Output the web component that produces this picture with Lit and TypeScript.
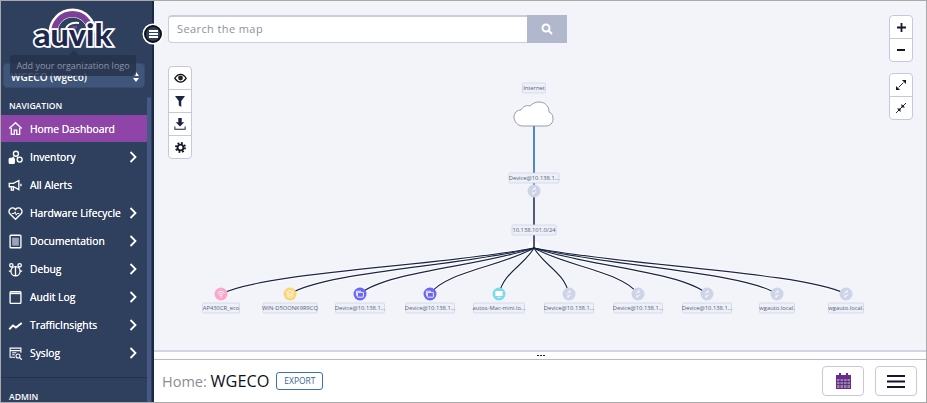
import { LitElement, html, svg, css } from 'lit';
import { customElement } from 'lit/decorators.js';

const HUB_X = 534;
const HUB_Y = 248;
const NODE_Y = 294;

const wifi = svg`<g fill="none" stroke="#fff" stroke-width="0.9"><path d="M-3.4 -1a5 5 0 0 1 6.8 0"/><path d="M-2.2 0.5a3.2 3.2 0 0 1 4.4 0"/><path d="M-1 1.9a1.5 1.5 0 0 1 2 0"/></g><circle cy="3" r="0.6" fill="#fff"/>`;
const layers = svg`<g fill="none" stroke="#fff" stroke-width="0.8"><path d="M0 -3.6 3.4 -1.8 0 0 -3.4 -1.8Z"/><path d="M-3.4 0 0 1.8 3.4 0"/><path d="M-3.4 1.8 0 3.6 3.4 1.8"/></g>`;
const windows = svg`<g fill="none" stroke="#fff" stroke-width="0.9"><rect x="-2.6" y="-1.6" width="6" height="4.8" rx="0.5"/><path d="M-3.6 1.6v-4.4h4.6"/></g>`;
const monitor = svg`<rect x="-3.6" y="-3" width="7.2" height="5" rx="0.6" fill="#fff"/><path d="M-1.6 3.4h3.2" stroke="#fff" stroke-width="0.9"/>`;
const device = svg`<g fill="none" stroke="#fff" stroke-width="1"><path d="M-1.8 -0.4 1 -3.4v2.2"/><path d="M1.8 0.4-1 3.4v-2.2"/></g>`;

const nodes = [
  { x: 221, label: 'AP430CR_eco', w: 37, color: '#f9a8cb', icon: wifi },
  { x: 290, label: 'WIN-D5OONK9R9CQ', w: 54, color: '#fbd475', icon: layers },
  { x: 360, label: 'Device@10.138.1...', w: 49, color: '#6b66f6', icon: windows },
  { x: 430, label: 'Device@10.138.1...', w: 49, color: '#6b66f6', icon: windows },
  { x: 499, label: 'autos-Mac-mini.lo...', w: 51, color: '#7bdbe6', icon: monitor },
  { x: 569, label: 'Device@10.138.1...', w: 49, color: '#ced4e8', icon: device },
  { x: 638, label: 'Device@10.138.1...', w: 49, color: '#ced4e8', icon: device },
  { x: 707, label: 'Device@10.138.1...', w: 49, color: '#ced4e8', icon: device },
  { x: 777, label: 'wgauto.local.', w: 35, color: '#ced4e8', icon: device },
  { x: 846, label: 'wgauto.local.', w: 35, color: '#ced4e8', icon: device },
];

const linkPath = (x: number) => {
  const dx = HUB_X - x;
  const c1x = x + dx * 0.14;
  const c2x = HUB_X - dx * 0.3;
  return `M${x} ${NODE_Y} C${c1x} ${NODE_Y - 22} ${c2x} ${HUB_Y + 18} ${HUB_X} ${HUB_Y}`;
};

const mapLabel = (cx: number, cy: number, w: number, text: string) => svg`
  <rect x=${cx - w / 2} y=${cy - 5} width=${w} height="10" rx="1" fill="#eef0f8" stroke="#cfd4e6" stroke-width="0.8"/>
  <text x=${cx} y=${cy + 2} text-anchor="middle" font-size="5.8" fill="#555e7d" font-family="Open Sans, sans-serif">${text}</text>`;

const ico = (body: unknown) => html`<svg class="nav-icon" viewBox="0 0 18 18" fill="none" stroke="#fff" stroke-width="1.6">${body}</svg>`;

const navItems = [
  { label: 'Home Dashboard', active: true, icon: ico(svg`<path d="M1.5 9 9 2l7.5 7"/><path d="M4 8v8h3.5v-5h3v5H14V8"/>`) },
  { label: 'Inventory', more: true, icon: ico(svg`<circle cx="9.5" cy="4.5" r="3"/><rect x="1.5" y="10" width="6" height="6" rx="1" fill="#fff"/><circle cx="14" cy="11.5" r="3"/><path d="M7 8l-1.5 2M11 8l1 1"/>`) },
  { label: 'All Alerts', icon: ico(svg`<path d="M1.5 6.5h5L13 3v11L6.5 10.5h-5z"/><path d="M4 11v3.5h2.5V11"/><path d="M15.500 7v3"/>`) },
  { label: 'Hardware Lifecycle', more: true, icon: ico(svg`<path d="M9 16 2.5 9.5a4 4 0 0 1 0-6 4.2 4.2 0 0 1 6.5.8 4.2 4.2 0 0 1 6.5-.8 4 4 0 0 1 0 6z"/><path d="M4.5 9h3l1-2 1.5 4 1-2h2.5" stroke-width="1.2"/>`) },
  { label: 'Documentation', more: true, icon: ico(svg`<rect x="2.5" y="1.5" width="13" height="15" rx="1"/><rect x="5" y="4.5" width="8" height="9.5" fill="#9aa5bd" stroke="none"/>`) },
  { label: 'Debug', more: true, icon: ico(svg`<circle cx="4" cy="4" r="2"/><circle cx="14" cy="4" r="2"/><circle cx="9" cy="11" r="5.500"/><path d="M9 5.500V16.500M1 11h2.500M14.500 11H17"/>`) },
  { label: 'Audit Log', more: true, icon: ico(svg`<rect x="2.5" y="2" width="13" height="14" rx="1"/><path d="M2.5 4h13" stroke-width="2"/>`) },
  { label: 'TrafficInsights', more: true, icon: ico(svg`<path d="M1.5 13.5 6 9l3.5 2.5L16.5 6" stroke-width="2.200"/>`) },
  { label: 'Syslog', more: true, icon: ico(svg`<path d="M15.5 8V2.500h-13v11h6" stroke-width="1.300"/><path d="M2.5 5.5h13M5 8h5M5 10.5h3" stroke-width="1.300"/><circle cx="12" cy="12" r="2.400" stroke-width="1.300"/><path d="m14 14 2.500 2.500" stroke-width="1.500"/>`) },
];

@customElement('app-root')
export class AppRoot extends LitElement {
  static styles = css`
    :host {
      display: flex;
      width: 927px;
      height: 403px;
      box-sizing: border-box;
      border: 1px solid #a9a9a9;
      font-family: 'Open Sans', sans-serif;
      background: #fff;
      overflow: hidden;
      position: relative;
    }
    .sidebar {
      width: 151px;
      flex: none;
      background: #2f405e;
      border-right: 2px solid #1b2947;
      color: #fff;
      display: flex;
      flex-direction: column;
      overflow: hidden;
    }
    .brand {
      height: 96px;
      flex: none;
      position: relative;
      padding: 62px 7px 0 2px;
      box-sizing: border-box;
    }
    .logo {
      position: absolute;
      left: 28px;
      top: 6px;
    }
    .org {
      height: 25px;
      box-sizing: border-box;
      background: #40557a;
      border: 1px solid #394c6f;
      border-radius: 4px;
      display: flex;
      align-items: center;
      justify-content: space-between;
      padding: 2px 5px 0 7px;
      font-size: 10px;
      font-weight: 600;
    }
    .updown {
      display: flex;
      flex-direction: column;
      gap: 2px;
    }
    .updown i {
      display: block;
      border-left: 3px solid transparent;
      border-right: 3px solid transparent;
    }
    .updown i:first-child {
      border-bottom: 4px solid #fff;
    }
    .updown i:last-child {
      border-top: 4px solid #fff;
    }
    .tip {
      position: absolute;
      left: 9px;
      top: 54px;
      width: 126px;
      height: 21px;
      border-radius: 2px;
      background: rgba(38, 50, 74, 0.82);
      color: #8b93a3;
      font-size: 9px;
      line-height: 21px;
      text-align: center;
      white-space: nowrap;
    }
    .tip::before {
      content: '';
      position: absolute;
      left: 59px;
      top: -5px;
      border-left: 5px solid transparent;
      border-right: 5px solid transparent;
      border-bottom: 5px solid rgba(38, 50, 74, 0.82);
    }
    .side-body {
      flex: 1;
      display: flex;
      min-height: 0;
    }
    nav {
      width: 146px;
      flex: none;
    }
    .thumb {
      width: 4px;
      background: #435a86;
      border-radius: 2px 2px 0 0;
    }
    .heading {
      height: 18px;
      padding-left: 8px;
      font-size: 8.6px;
      font-weight: 600;
      line-height: 19px;
    }
    .item {
      height: 28px;
      display: flex;
      align-items: center;
      padding: 0 10px 0 3px;
      font-size: 10.3px;
      font-weight: 500;
      text-shadow: 0 0 0.5px #fff;
      white-space: nowrap;
    }
    .item.active {
      background: #8e45a7;
      border-bottom: 1px solid #27485a;
      box-sizing: border-box;
    }
    .nav-icon {
      width: 15px;
      height: 15px;
      margin: 0 7px 0 4px;
      flex: none;
    }
    .label {
      flex: 1;
    }
    .chev {
      width: 8px;
      height: 12px;
    }
    .divider {
      margin-top: 10px;
      border-top: 1px solid #25324e;
    }
    .admin {
      margin-top: 10px;
    }
    .collapse {
      position: absolute;
      z-index: 2;
      left: 143px;
      top: 24px;
      width: 18px;
      height: 18px;
      box-sizing: border-box;
      border-radius: 50%;
      background: #2f405e;
      border: 2px solid #111;
      box-shadow: 0 0 0 1.5px #fff;
      display: flex;
      flex-direction: column;
      justify-content: center;
      align-items: center;
      gap: 1.5px;
    }
    .collapse i {
      display: block;
      width: 9px;
      height: 1.5px;
      background: #fff;
    }
    .main {
      flex: 1;
      display: flex;
      flex-direction: column;
      min-width: 0;
    }
    .map {
      height: 349px;
      flex: none;
      position: relative;
      background: #f3f4fa;
      overflow: hidden;
    }
    .map > svg.canvas {
      position: absolute;
      left: 0;
      top: 0;
    }
    .search {
      position: absolute;
      left: 14px;
      top: 14px;
      width: 399px;
      height: 28px;
      display: flex;
    }
    .search-box {
      flex: 1;
      background: #fff;
      border: 1px solid #c8cde0;
      border-top-width: 2px;
      border-right: none;
      border-radius: 4px 0 0 4px;
      font-size: 11px;
      letter-spacing: 0.4px;
      color: #8d919c;
      padding-left: 8px;
      line-height: 24px;
    }
    .search-btn {
      width: 40px;
      background: #b1b7cd;
      display: flex;
      align-items: center;
      justify-content: center;
    }
    .tools {
      position: absolute;
      display: flex;
      flex-direction: column;
      width: 24px;
      box-sizing: border-box;
      background: #fff;
      border: 1px solid #c4c9dd;
      border-radius: 4px;
    }
    .tools.left {
      left: 14px;
      top: 65px;
    }
    .tools.zoom {
      left: 735px;
      top: 14px;
    }
    .tools.fit {
      left: 735px;
      top: 72px;
    }
    .tools span {
      height: 22px;
      display: flex;
      align-items: center;
      justify-content: center;
      border-bottom: 1px solid #c4c9dd;
    }
    .tools span:last-child {
      border-bottom: none;
    }
    .splitter {
      height: 10px;
      flex: none;
      box-sizing: border-box;
      background: #fff;
      border-top: 2px solid #d1d5e4;
      border-bottom: 1px solid #b5bbd3;
      display: flex;
      justify-content: center;
      gap: 1px;
      padding: 3px 0 0 2px;
    }
    .splitter i {
      width: 2px;
      height: 1px;
      background: #222;
    }
    footer {
      flex: 1;
      display: flex;
      align-items: center;
      padding: 0 9px 0 8px;
    }
    .crumb {
      font-size: 14.5px;
      color: #8a8d96;
      margin-right: 7px;
    }
    .crumb b {
      font-weight: 400;
      color: #0e1024;
      font-size: 16.3px;
    }
    .export {
      border: 1px solid #3e6fb3;
      border-radius: 3px;
      width: 47px;
      height: 18px;
      box-sizing: border-box;
      font-size: 8.5px;
      color: #3f5f96;
      text-align: center;
      line-height: 16px;
    }
    .spacer {
      flex: 1;
    }
    .foot-btn {
      width: 42px;
      height: 30px;
      box-sizing: border-box;
      border: 1px solid #c4c9dd;
      border-radius: 4px;
      display: flex;
      align-items: center;
      justify-content: center;
      margin-left: 11px;
    }
  `;

  render() {
    const chevron = html`<svg class="chev" viewBox="0 0 8 12" fill="none" stroke="#fff" stroke-width="1.8"><path d="m1.5 1 5 5-5 5"/></svg>`;
    return html`
      <aside class="sidebar">
        <div class="brand">
          <svg class="logo" width="92" height="46" viewBox="0 0 92 46">
            <path d="M24 26a19.500 20 0 0 1 39 0" fill="none" stroke="#fff" stroke-width="9"/>
            <path d="M25 26a18.500 19 0 0 1 37 0" fill="none" stroke="#7d3f98" stroke-width="6"/>
            <path d="M36 27c0-9 6-12 14-11" fill="none" stroke="#fff" stroke-width="2"/>
            <path d="M40 30c0-7 3-10 8-10" fill="none" stroke="#7d3f98" stroke-width="3"/>
            <text x="44" y="39" text-anchor="middle" font-family="Lato, sans-serif" font-weight="900" font-size="31" textLength="78" lengthAdjust="spacingAndGlyphs" fill="#1c2850" stroke="#fff" stroke-width="3.500" paint-order="stroke">auvik</text>
          </svg>
          <div class="org">
            <span>WGECO (wgeco)</span>
            <span class="updown"><i></i><i></i></span>
          </div>
          <div class="tip">Add your organization logo</div>
        </div>
        <div class="side-body">
          <nav>
            <div class="heading">NAVIGATION</div>
            ${navItems.map(
              (item) => html`<div class="item ${item.active ? 'active' : ''}">
                ${item.icon}<span class="label">${item.label}</span>${item.more ? chevron : ''}
              </div>`,
            )}
            <div class="divider"></div>
            <div class="heading admin">ADMIN</div>
          </nav>
          <div class="thumb"></div>
        </div>
      </aside>
      <div class="collapse"><i></i><i></i><i></i></div>
      <div class="main">
        <div class="map">
          <svg class="canvas" width="772" height="349" viewBox="154 1 772 349">
            ${nodes.map((n) => svg`<path d=${linkPath(n.x)} fill="none" stroke="#fff" stroke-width="3"/>`)}
            <circle cx="534" cy="247" r="6" fill="#fff"/>
            <path d="M534 126V190" stroke="#1a62b5" stroke-width="1.5"/>
            <path d="M534 190V248" stroke="#1d2a45" stroke-width="1.5"/>
            ${nodes.map((n) => svg`<path d=${linkPath(n.x)} fill="none" stroke="#1b2747" stroke-width="1.2"/>`)}
            <path d="M523 126C517 126 514 121 514 117C514 113 517 110 521 110C523 106 527 105 530 106C533 103 536 102 539 102C545 102 549 106 549 112C552 113 553 116 553 119C553 123 550 126 546 126Z" fill="#fff" stroke="#8f929b" stroke-width="0.9"/>
            ${mapLabel(534, 88, 23, 'Internet')}
            ${mapLabel(534, 178, 50, 'Device@10.138.1...')}
            ${mapLabel(534, 230, 44, '10.138.101.0/24')}
            <g transform="translate(534 191)"><circle r="6.5" fill="#ced4e8"/>${device}</g>
            ${nodes.map(
              (n) => svg`
                <g transform="translate(${n.x} ${NODE_Y})"><circle r="6.5" fill=${n.color}/>${n.icon}</g>
                ${mapLabel(n.x, 308, n.w, n.label)}`,
            )}
          </svg>
          <div class="search">
            <div class="search-box">Search the map</div>
            <div class="search-btn">
              <svg width="12" height="12" viewBox="0 0 12 12" fill="none" stroke="#fff" stroke-width="2"><circle cx="5" cy="5" r="3.5"/><path d="m7.5 7.5 3.5 3.5"/></svg>
            </div>
          </div>
          <div class="tools left">
            <span><svg width="13" height="10" viewBox="0 0 16 12"><path d="M1 6.5C3 3 5.500 1.500 8 1.500s5 1.500 7 5c-2 3-4.500 4.500-7 4.500S3 9.500 1 6.500z" fill="#fff" stroke="#111" stroke-width="1.6"/><circle cx="8" cy="6" r="3" fill="#222"/></svg></span>
            <span><svg width="10" height="11" viewBox="0 0 12 13"><path d="M0 0h12L7.500 6v7l-3-2V6z" fill="#1b2440"/></svg></span>
            <span><svg width="12" height="12" viewBox="0 0 14 14" fill="#1b2440"><path d="M5 0h4v5h3L7 10 2 5h3z"/><path d="M1 10v3h12v-3" fill="none" stroke="#1b2440" stroke-width="1.2"/></svg></span>
            <span><svg width="11" height="11" viewBox="0 0 12 12" fill="none" stroke="#14182a"><circle cx="6" cy="6" r="3.2" stroke-width="2"/><circle cx="6" cy="6" r="5" stroke-width="2" stroke-dasharray="2 1.93"/></svg></span>
          </div>
          <div class="tools zoom">
            <span><svg width="9" height="9" viewBox="0 0 10 10"><path d="M5 0v10M0 5h10" stroke="#14182a" stroke-width="2"/></svg></span>
            <span><svg width="8" height="2" viewBox="0 0 8 2"><path d="M0 1h8" stroke="#14182a" stroke-width="2"/></svg></span>
          </div>
          <div class="tools fit">
            <span><svg width="10" height="10" viewBox="0 0 11 11" fill="#14182a"><path d="M3 8l5-5" stroke="#14182a"/><path d="M6.500 0H11v4.500zM0 6.500V11h4.500z"/></svg></span>
            <span><svg width="10" height="10" viewBox="0 0 11 11" fill="#14182a"><path d="M0 11 11 0" stroke="#14182a"/><path d="M6 1v4h4zM1 6h4v4z"/></svg></span>
          </div>
        </div>
        <div class="splitter"><i></i><i></i><i></i></div>
        <footer>
          <div class="crumb">Home: <b>WGECO</b></div>
          <div class="export">EXPORT</div>
          <div class="spacer"></div>
          <div class="foot-btn">
            <svg width="15" height="16" viewBox="0 0 15 16"><path d="M0 2h15v3H0z" fill="#6d2a8c"/><path d="M3 0h2v3H3zM10 0h2v3h-2z" fill="#6d2a8c"/><rect x=".5" y="5.5" width="14" height="10" fill="#9d7bb5" stroke="#6d2a8c"/><path d="M1 8.500h13M1 11.500h13M4 6v9M7.500 6v9M11 6v9" stroke="#4d2a70" stroke-width=".8"/></svg>
          </div>
          <div class="foot-btn">
            <svg width="18" height="13" viewBox="0 0 18 13"><path d="M0 1h18M0 6.500h18M0 12h18" stroke="#14182a" stroke-width="2"/></svg>
          </div>
        </footer>
      </div>
    `;
  }
}
